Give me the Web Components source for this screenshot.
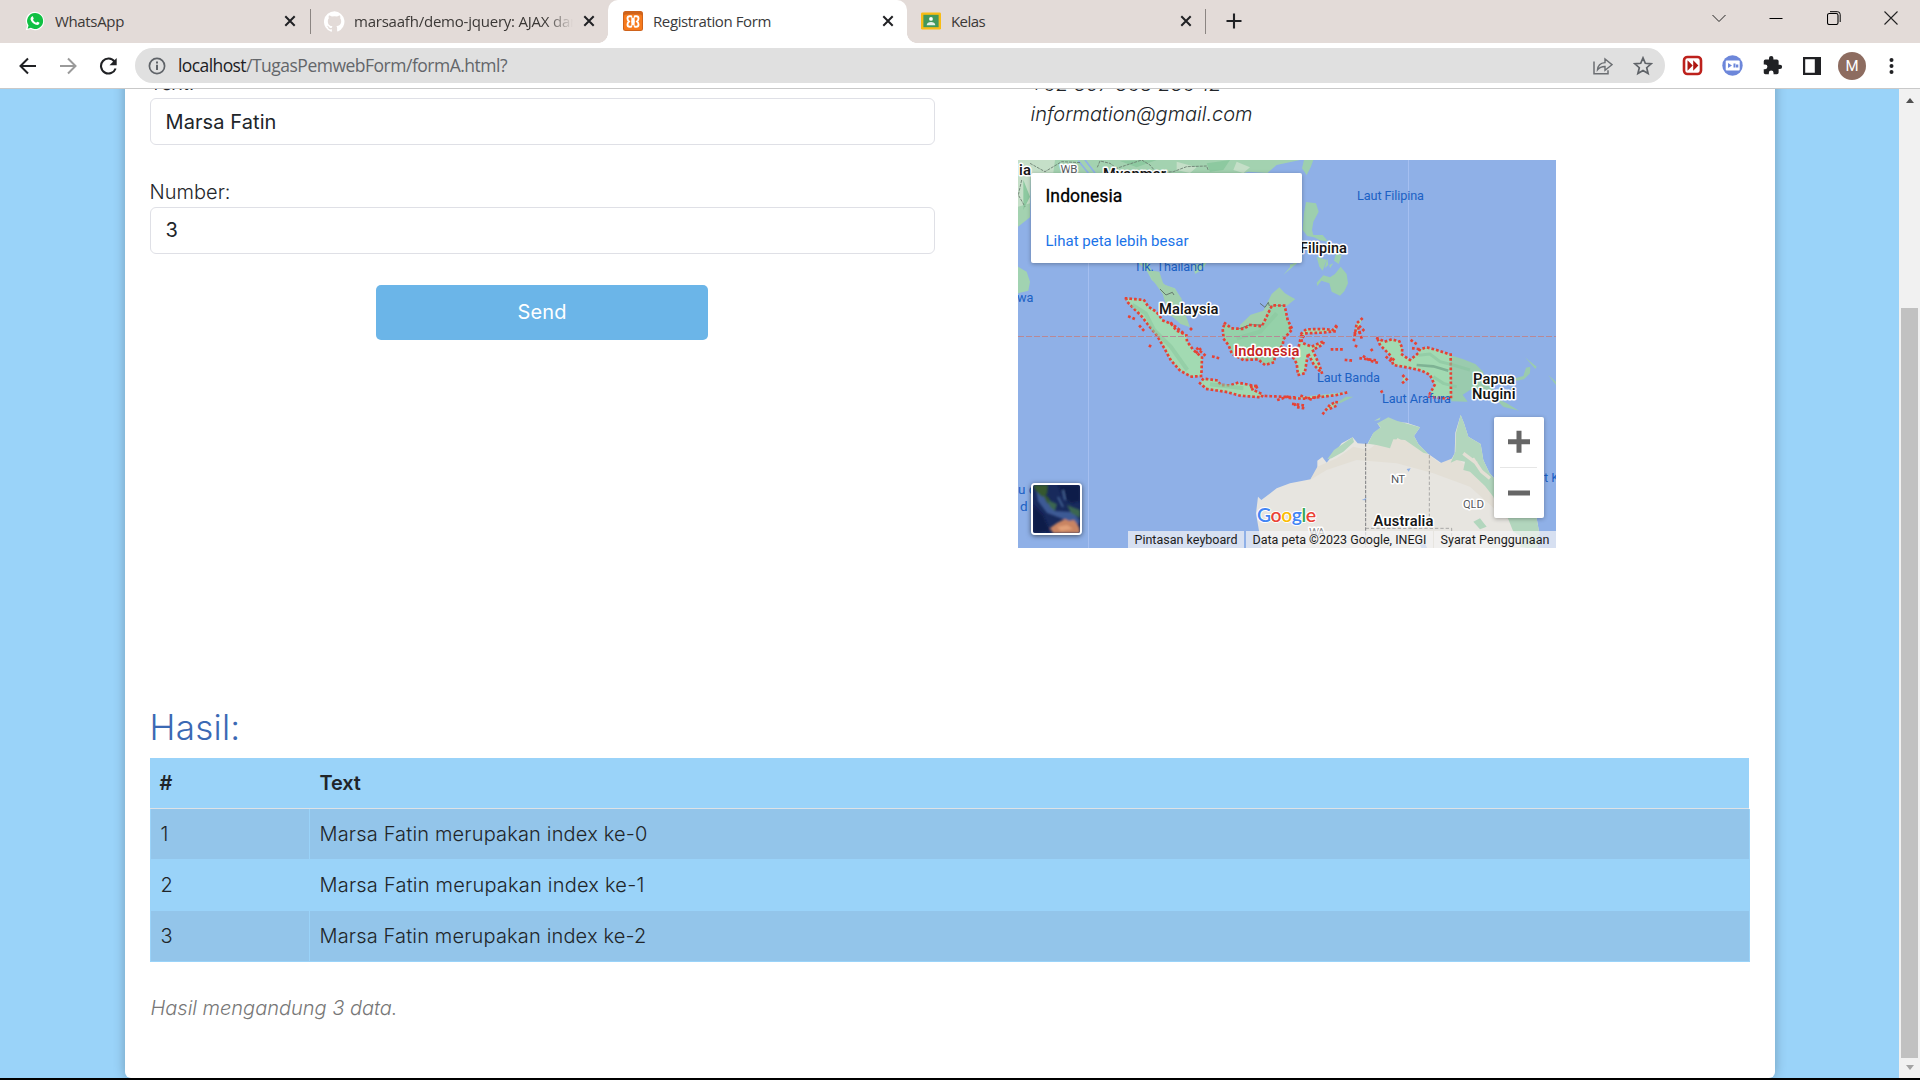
<!DOCTYPE html>
<html lang="id">
<head>
<meta charset="utf-8">
<title>Registration Form</title>
<style>
html,body{margin:0;height:100%;overflow:hidden;background:#000}
body{font-family:Inter,"Liberation Sans",sans-serif}
</style>
</head>
<body>
<browser-window></browser-window>
<script>
const define = (name, html, ready) => {
  const tpl = document.createElement('template');
  tpl.innerHTML = html;
  customElements.define(name, class extends HTMLElement {
    constructor() {
      super();
      this.attachShadow({mode: 'open'}).appendChild(tpl.content.cloneNode(true));
    }
    connectedCallback() { if (ready) ready.call(this, this.shadowRoot); }
  });
};

/* Text run spaced to a given width. */
define('fit-text', `<style>:host{display:inline-block;white-space:pre}span{display:inline-block}</style><span><slot></slot></span>`,
  function (root) {
    const w = +this.getAttribute('w'), s = root.querySelector('span');
    const n = this.textContent.length;
    s.style.letterSpacing = ((w - s.getBoundingClientRect().width) / n) + 'px';
    this.style.width = w + 'px';
  });

define('close-icon', `<style>:host{display:block;width:12px;height:12px}svg{display:block}</style>
<svg width="12" height="12" viewBox="0 0 12 12"><path d="M1.3 1.3 10.7 10.7M10.7 1.3 1.3 10.7" stroke="#202124" stroke-width="2" fill="none"/></svg>`);

define('browser-tab', `<style>
:host{display:flex;align-items:center;height:43px;box-sizing:border-box;position:relative;font:15px/20px "Open Sans","Noto Sans",sans-serif;color:#3b3836;padding:0 13px 1px 15px;width:299px}
.t{flex:1;overflow:hidden;white-space:nowrap;margin-left:10px;height:20px;padding-bottom:1px}
:host([fade]) .t{margin-left:9px;-webkit-mask-image:linear-gradient(90deg,#000 192px,transparent 219px)}
:host([active]){background:#fff;border-radius:10px 10px 0 0;color:#3a3a3c}
:host([active])::before,:host([active])::after{content:"";position:absolute;bottom:0;width:10px;height:10px}
:host([active])::before{left:-10px;background:radial-gradient(circle at 0 0,transparent 9.6px,#fff 10.2px)}
:host([active])::after{right:-10px;background:radial-gradient(circle at 100% 0,transparent 9.6px,#fff 10.2px)}
</style><slot name="icon"></slot><div class="t"><slot></slot></div><close-icon></close-icon>`);

define('tab-strip', `<style>
:host{display:flex;height:43px;background:#e3dbd8;align-items:center;justify-content:space-between}
.tabs{display:flex;align-items:center}
.sep{width:1px;height:25px;background:#8b8582}
svg{display:block;flex:none}
.ctl{display:flex;align-items:center;gap:43.500px;padding-right:22px;padding-bottom:7px}
.kel{width:298px;padding-left:14px;padding-right:13px}
.plus{margin:0 0 1px 20px}
</style>
<div class="tabs">
 <browser-tab style="width:310px;padding-left:25px;padding-right:14px">
  <svg slot="icon" width="20" height="20" viewBox="0 0 20 20"><path d="M10 .7a9.2 9.2 0 0 1 0 18.5 9 9 0 0 1-4.4-1.1L.8 19.3l1.3-4.7A9.2 9.2 0 0 1 10 .7Z" fill="#fff"/><path d="M10 2a8 8 0 1 1-4.1 14.8L2.6 17.7l.9-3.2A8 8 0 0 1 10 2Z" fill="#10c043"/><path d="M7 5.5c.4-.3.8-.1 1 .3l.7 1.7c.1.4-.6 1-.7 1.2.7 1.500 1.700 2.400 3.200 3 .3-.2.8-1.100 1.200-1l1.800.9c.5.3.1 1.300-.3 1.700-1 .9-2.200.8-3.600.2-2.500-1-4.400-3.500-4.700-5C5.500 7.300 6 6.200 7 5.500Z" fill="#fff"/></svg>
  <fit-text w="69">WhatsApp</fit-text></browser-tab>
 <div class="sep"></div>
 <browser-tab fade style="width:297px;padding-left:13px">
  <svg slot="icon" width="21" height="21" viewBox="0 0 16 16"><path fill="#fff" d="M8 .2a8 8 0 0 0-2.500 15.600c.4.1.5-.2.500-.4v-1.500c-2.200.5-2.700-1-2.700-1-.4-.9-.9-1.200-.9-1.200-.7-.5.1-.5.1-.5.8.1 1.200.8 1.200.8.7 1.300 1.900.9 2.300.7.1-.5.3-.9.5-1.100-1.800-.2-3.600-.9-3.600-4 0-.9.3-1.600.8-2.100-.1-.2-.4-1 .1-2.100 0 0 .7-.2 2.200.8a7.500 7.500 0 0 1 4 0c1.500-1 2.200-.8 2.200-.8.4 1.100.2 1.900.1 2.100.5.6.8 1.300.8 2.100 0 3.100-1.900 3.700-3.700 3.900.3.300.6.800.6 1.500v2.200c0 .2.100.500.600.4A8 8 0 0 0 8 .2Z"/></svg>
  <fit-text w="225">marsaafh/demo-jquery: AJAX dan</fit-text></browser-tab>
 <browser-tab active>
  <svg slot="icon" width="20" height="20" viewBox="0 0 20 20"><rect width="20" height="20" rx="2.500" fill="#cf631b"/><rect x="1" y="3.500" width="18" height="15.500" rx="1.500" fill="#f77a1c"/><path d="M6.700 5.200h1.200q1.400 0 1.400 1.500v7.600q0 1.500-1.400 1.500H6.700q-2.200 0-2.200-2.300 0-1.700 1.500-3-1.500-1.300-1.500-3 0-2.300 2.200-2.300ZM13.300 5.200h-1.200q-1.400 0-1.400 1.500v7.600q0 1.500 1.400 1.500h1.200q2.200 0 2.200-2.300 0-1.700-1.500-3 1.500-1.300 1.500-3 0-2.300-2.200-2.300Z" fill="none" stroke="#fff" stroke-width="1.900"/><path d="M10 3.500v3.300M10 14.200v3.500" stroke="#f77a1c" stroke-width="1.600"/><path d="M8.500 10.500h3" stroke="#fff" stroke-width="2.400"/></svg>
  <fit-text w="118">Registration Form</fit-text></browser-tab>
 <browser-tab class="kel">
  <svg slot="icon" width="20" height="18" viewBox="0 0 21 18"><rect width="21" height="18" rx="1.500" fill="#f8bc14"/><rect x="2.500" y="2.500" width="16" height="13" fill="#43985c"/><circle cx="10.500" cy="6.800" r="2" fill="#fff"/><path d="M6 13.500c0-4.500 9-4.500 9 0Z" fill="#e5f1e8"/></svg>
  <fit-text w="34">Kelas</fit-text></browser-tab>
 <div class="sep"></div>
 <svg class="plus" width="16" height="16" viewBox="0 0 16 16"><path d="M8 .5v15M.5 8h15" stroke="#202124" stroke-width="2.100"/></svg>
</div>
<div class="ctl">
 <svg width="14" height="14" viewBox="0 0 14 14"><path d="m.5 4 6.500 6.500L13.500 4" fill="none" stroke="#222"/></svg>
 <svg width="14" height="14" viewBox="0 0 14 14"><path d="M.5 7.500h13" stroke="#000"/></svg>
 <svg width="14" height="14" viewBox="0 0 14 14"><rect x=".5" y="2.500" width="10.500" height="11" rx="1.800" fill="none" stroke="#000" stroke-width="1.100"/><path d="M3 .7h7.500q2.700 0 2.700 2.800v7.500" fill="none" stroke="#000"/></svg>
 <svg width="14" height="14" viewBox="0 0 14 14"><path d="m.5.5 13 13M13.500.5l-13 13" stroke="#222" stroke-width="1.100"/></svg>
</div>`);

define('tool-bar', `<style>
:host{display:flex;align-items:center;height:45px;background:#fff;border-bottom:1px solid #c9c9c9;font:17.5px/24px "Open Sans","Noto Sans",sans-serif}
svg{display:block;flex:none}
.nav{display:flex;align-items:center;gap:21.500px;width:117px;padding-left:18px}
.box{display:flex;align-items:center;flex:1;height:35px;border-radius:18px;background:#e0e0e0;box-sizing:border-box;padding:0 12px 0 13px;color:#63666a}
.u{flex:1;margin-left:12px;display:flex;padding-bottom:2px}
.u .h{color:#202124}
.act{display:flex;gap:20px;align-items:center}
.ext{display:flex;align-items:center;width:255px;box-sizing:border-box;padding-left:17px}
.av{width:28px;height:28px;border-radius:50%;background:#8d6c60;color:#fff;font:15px/28px Roboto,sans-serif;text-align:center;margin-left:17px}
</style>
<div class="nav">
 <svg width="19" height="18" viewBox="0 0 19 18"><path d="M18 9H3M10 1.500 2.500 9l7.500 7.500" fill="none" stroke="#202124" stroke-width="2"/></svg>
 <svg width="19" height="18" viewBox="0 0 19 18"><path d="M1 9h15M9 1.500 16.500 9 9 16.500" fill="none" stroke="#9a9a9a" stroke-width="2"/></svg>
 <svg width="19" height="18" viewBox="0 0 19 18"><path d="M15.500 4.500A7.500 7.500 0 1 0 16.600 11.500" fill="none" stroke="#202124" stroke-width="2.100"/><path d="M17.700 1v7.200h-7.200Z" fill="#202124"/></svg>
</div>
<div class="box">
 <svg width="18" height="18" viewBox="0 0 18 18"><circle cx="9" cy="9" r="7.600" fill="none" stroke="#5f6368" stroke-width="1.700"/><path d="M9 7.800v5.200M9 4.600v1.900" stroke="#5f6368" stroke-width="2"/></svg>
 <div class="u"><fit-text w="68" class="h">localhost</fit-text><fit-text w="261">/TugasPemwebForm/formA.html?</fit-text></div>
 <div class="act">
  <svg width="20" height="18" viewBox="0 0 20 18"><path d="M1 4.500v12.300h14v-3.500" fill="none" stroke="#6b6e72" stroke-width="1.500"/><path d="M4.500 12.800c.3-4.500 2.900-6.800 7.500-7.200V2l7 5.700-7 5.500V9.500c-3.500 0-5.700 1-7.500 3.300Z" fill="none" stroke="#6b6e72" stroke-width="1.400"/></svg>
  <svg width="20" height="20" viewBox="0 0 20 20"><path d="m10 1.900 2.300 5.400 5.900.5-4.500 3.900 1.400 5.800L10 14.400l-5.100 3.100 1.400-5.800L1.800 7.800l5.900-.5Z" fill="none" stroke="#5f6368" stroke-width="1.700"/></svg>
 </div>
</div>
<div class="ext">
 <svg width="21" height="21" viewBox="0 0 21 21"><rect x="2" y="2" width="17" height="17" rx="3.500" fill="#fff" stroke="#bd211c" stroke-width="2.600"/><path d="M5.500 5.300v10.500l5.200-5.200ZM11.200 5.300v10.500l5.200-5.200Z" fill="#ae1712"/></svg>
 <svg style="margin-left:19px" width="21" height="21" viewBox="0 0 21 21"><circle cx="10.500" cy="10.500" r="10.200" fill="#6d87da"/><rect x="3.700" y="5.500" width="14" height="10" rx="1" fill="#fff"/><path d="m6 8 4 2.500L6 13ZM11.500 8.500h2v4h-2ZM14 9.500h2.300v3H14Z" fill="#6d87da"/></svg>
 <svg style="margin-left:19px" width="21" height="21" viewBox="0 0 24 24"><path fill="#202124" d="M20.500 11H19V7a2 2 0 0 0-2-2h-4V3.500a2.500 2.500 0 0 0-5 0V5H4a2 2 0 0 0-2 2v3.800h1.500a2.700 2.700 0 0 1 0 5.400H2V20c0 1.100.9 2 2 2h3.800v-1.500a2.700 2.700 0 0 1 5.400 0V22H17a2 2 0 0 0 2-2v-4h1.500a2.500 2.500 0 0 0 0-5Z"/></svg>
 <svg style="margin-left:20px" width="18" height="18" viewBox="0 0 18 18"><path d="M0 0h18v18H0ZM2.200 2.200v13.600h9.600V2.200Z" fill-rule="evenodd" fill="#202124"/></svg>
 <div class="av">M</div>
 <svg style="margin-left:23px" width="5" height="18" viewBox="0 0 5 18"><g fill="#202124"><circle cx="2.500" cy="3" r="2"/><circle cx="2.500" cy="9" r="2"/><circle cx="2.500" cy="15" r="2"/></g></svg>
</div>`);

define('scroll-bar', `<style>
:host{display:flex;flex-direction:column;align-items:center;width:21px;background:#f1f1f1}
i{display:block;width:0;height:0;border:4.500px solid transparent}
.up{border-bottom:5px solid #505050;border-top:0;margin-top:9px}
.th{width:17px;height:750px;background:#c1c1c1;margin-top:205px}
.dn{border-top:5px solid #a3a3a3;border-bottom:0;margin-top:7px}
</style><i class="up"></i><div class="th"></div><i class="dn"></i>`);

define('form-field', `<style>
:host{display:block;font-weight:300;font-size:20px;line-height:30px;color:#24262a}
.in{display:flex;align-items:center;box-sizing:border-box;height:47px;border:1px solid #dfe0e6;border-radius:6px;padding:0 15px;font-weight:400;color:#212529}
:host(:not([raised])) ::slotted([slot=value]){margin-top:1px}
:host([raised]) ::slotted([slot=value]){margin-top:-1px}
</style><div class="l"><slot name="label"></slot></div><div class="in"><slot name="value"></slot></div>`);

define('send-button', `<style>
:host{display:flex;align-items:center;justify-content:center;width:332px;height:55px;box-sizing:border-box;padding:0 0 2px 1px;border-radius:5px;background:#6bb5e8;color:#fff;font-size:20px;line-height:30px;font-weight:400}
</style><slot></slot>`);

define('map-view', `<style>
:host{display:block;position:relative;width:538px;height:388px;overflow:hidden;font-family:Roboto,sans-serif}
svg{display:block}
.card{position:absolute;left:13px;top:13px;width:271px;height:90px;box-sizing:border-box;background:#fff;border-radius:2px;box-shadow:0 1px 4px rgba(0,0,0,.3);padding:12px 15px}
.card b{display:block;font-weight:400;-webkit-text-stroke:.3px #000;font-size:17.500px;line-height:22px;color:#000}
.card a{display:block;font-size:15px;line-height:20px;color:#1a73e8;margin-top:24px}
.zoom{position:absolute;left:476px;top:257px;width:50px;height:101px;background:#fff;border-radius:2px;box-shadow:0 1px 4px rgba(0,0,0,.3)}
.thumb{position:absolute;left:13px;top:323px;width:51px;height:52px;box-sizing:border-box;border:2px solid #fff;border-radius:4px;box-shadow:0 1px 5px rgba(0,0,0,.55);overflow:hidden}
.cr{position:absolute;right:0;bottom:0;display:flex;gap:1px;font-size:12.500px;line-height:17px;color:#1c1c1c;height:17px}
.cr div{background:rgba(245,245,245,.7);box-sizing:border-box;padding-left:7px}
.a{paint-order:stroke;stroke:#fff;stroke-width:3px;stroke-linejoin:round}
</style>
<svg width="538" height="388" viewBox="1018 160 538 388">
<rect x="1018" y="160" width="538" height="388" fill="#8fb0e7"/>
<path d="M1088.500 160v388M1408.500 160v388" stroke="#a5bff0"/>
<g transform="translate(1010 80) scale(.33333)">
 <path fill="#a3d2b0" d="M24 240H870L800 255 772 279 715 275 690 283 560 283 470 279 430 283 300 300 215 280 190 300 62 300 60 412 24 440Z"/>
 <path fill="#c5dfc8" d="M24 240H135L130 278 62 280 60 370 24 380ZM500 245 560 262 540 279 500 270ZM680 245 720 262 700 279 670 270Z"/>
 <path fill="#8dc9a0" d="M40 300 60 350 40 390ZM590 250 660 240 640 270 600 275ZM330 243 440 240 380 262Z"/>
 <path d="M205 242 235 279M225 240 255 279" fill="none" stroke="#8fb0e7" stroke-width="5"/>
 <path d="M60 250 105 275 155 245 213 248M262 262 270 243 300 250 320 265 395 240 420 255 440 279 490 275 530 260 590 258 595 272M35 300 25 345 45 380" fill="none" stroke="#687a6e" stroke-width="2.500" stroke-dasharray="9 3"/>
 <path d="M24 560 50 575 60 605 55 632 24 640ZM385 548 410 545 430 580 465 615 495 625 510 650 480 640 455 625 425 600 412 575ZM550 555 590 548 575 570 555 582ZM820 585 850 550 862 548Z" fill="#a1d3b1"/>
</g>
<g transform="translate(1010 270) scale(.33333)">
 <path fill="#a1cfad" d="M412 0 448 5 460 42 492 56 514 84 528 138 540 172 512 162 475 130 458 72 430 32ZM690 165 722 134 760 122 785 72 808 52 825 70 855 88 830 108 788 106 762 164 720 172 690 178Z"/>
 <path fill="none" stroke="#596861" stroke-width="2.500" d="M450 57 468 75 487 67 492 75M750 100 765 112 775 97 778 108M684 178 718 165 762 165 785 107 825 107"/>
 <g fill="#a2dab2" stroke="#e64235" stroke-width="8" stroke-dasharray=".1 14" stroke-linecap="square">
 <path d="M348 85 370 87 402 90 414 109 440 126 458 151 483 161 500 182 529 195 531 214 550 240 576 262 574 318 544 320 510 302 482 270 462 233 440 195 418 169 395 139 354 98Z"/>
 <path d="M570 340 580 326 622 331 632 345 660 346 684 338 745 350 726 358 758 373 755 382 690 377 650 366 590 357Z"/>
 <path fill="#95d1a9" d="M645 160 665 175 700 177 720 165 756 169 786 106 824 107 833 150 847 178 821 207 818 225 795 258 792 277 765 285 744 268 700 270 666 252 656 226 641 207 638 176Z"/>
 <path d="M358 140 372 146M390 169 400 180M420 228 430 234M543 177 545 179M484 160 520 189M562 236 590 260M560 247 575 233M610 260 624 264M724 350 747 347M768 378 855 382M805 389 840 378M855 404 868 400"/>
 </g>
 <path d="m367 105 40 25 25 50 50 50 50 70M680 205 750 185 800 130M600 343 700 355" fill="none" stroke="#8cc8a0" stroke-width="12" opacity=".6"/>
</g>
<g transform="translate(1290 150) scale(.33333)" fill="#9dcfae">
 <path d="M42 30H70L62 52 50 75 36 55ZM48 156 78 160 86 185 70 215 66 240 72 262 52 258 38 240 42 190ZM60 255 98 255 115 275 88 270ZM80 320 110 330 98 362 88 350ZM112 325 104 355 115 345ZM138 310 155 316 146 342 132 332ZM118 345 130 340 120 355ZM80 398 100 376 120 382 135 372 152 350 170 372 174 400 163 424 150 437 125 425 118 400 94 392 82 408ZM0 355 22 340 0 343ZM0 440 15 447 0 455Z"/>
</g>
<g transform="translate(1290 270) scale(.33333)">
 <path fill="#9acbae" d="M482 256 520 268 556 282 580 306 582 335 605 350 620 385 650 400 687 422 640 410 610 380 575 362 540 360 518 374 533 395 484 394ZM670 326 700 318 708 293 721 290 720 310 702 328 680 332ZM705 262 740 290 736 297ZM775 316 798 335 798 345ZM140 398 168 380 190 380 150 400Z"/>
 <g fill="#a2dab2" stroke="#e64235" stroke-width="8" stroke-dasharray=".1 14" stroke-linecap="square">
 <path d="M262 205 285 215 305 208 328 214 337 235 335 253 360 270 382 252 390 238 410 232 440 240 482 254 483 387 415 380 434 345 420 315 395 302 355 293 310 285 300 255 270 225Z"/>
 <path d="M35 190 48 178 100 177 128 180 142 164 134 184 95 188 48 190 34 207 36 218 65 230 102 213 98 224 68 240 88 285 96 310 72 285 54 250 44 310 24 315 20 280 10 265 25 235Z"/>
 <path d="M192 210 200 160 217 145M195 190 215 185M210 170 220 180M198 228 205 233M126 238 168 238M168 270 190 272M212 265 265 272M245 240 252 235M365 212 380 222M370 235 392 238M340 318 350 328 336 340M275 365 284 360M0 384 40 386 100 380 140 375 180 365M10 402 48 407M25 412 50 416M100 430 120 404 140 395 138 408 115 418M0 174 8 182"/>
 <path fill="none" d="M35 378 62 388 90 376M205 175 215 205M222 260 240 272 262 278M290 262 305 275 315 262"/>
 </g>
 <path d="M380 285 430 289 475 302" fill="none" stroke="#7eb394" stroke-width="8"/>
 <path d="M385 256 420 252 450 275 490 285 540 300M430 320 460 340 500 350" fill="none" stroke="#8ac5a0" stroke-width="9" opacity=".6"/>
</g>
<path d="M1018 336.500H1556" stroke="#b88896" stroke-dasharray="6 2"/>
<g transform="translate(1290 400) scale(.33333)">
 <path fill="#e7e5e0" d="M-102 340 -96 290 -86 300 -40 265 0 250 62 238 82 208 82 182 97 171 110 188 132 160 155 130 188 112 203 130 232 132 250 100 272 85 262 70 300 65 350 68 390 82 372 108 385 132 412 160 455 190 478 190 494 160 496 98 512 45 522 70 535 110 572 132 580 180 598 218 625 250 690 300 740 355 748 400 742 450H-85L-90 410Z"/>
 <path fill="#e3dfd6" d="M82 200 140 175 190 140 235 150 300 100 370 130 450 190 500 170 570 240 630 300 690 380 640 350 540 260 430 220 320 190 200 180 110 210 60 240Z"/>
 <path fill="#b2d6bd" d="M112 178 132 150 188 112 192 126 160 155 125 175ZM234 131 250 98 272 82 262 70 295 52 320 62 390 82 372 108 385 132 415 162 400 158 345 120 310 118 300 145 260 135ZM252 62 272 52 268 60ZM482 188 496 155 498 98 512 44 522 70 535 110 572 132 580 180 598 218 625 250 690 300 740 355 748 400 742 450 690 440 700 415 670 395 652 350 625 340 610 290 585 258 540 215 520 210 525 185 500 180ZM550 365 570 355 590 380 570 388Z"/>
 <path fill="none" stroke="#e4dfd5" stroke-width="10" d="M320 118 355 138M548 175 575 215 600 235M520 160 560 190"/>
 <path fill="#8fb0e7" d="M350 207 362 205 356 215ZM215 300 230 293 226 301ZM390 435 405 430 412 445H395Z"/>
 <path fill="none" stroke="#65686c" stroke-width="2.500" stroke-dasharray="10 4" d="M227 130V440"/><path fill="none" stroke="#9b9b9a" stroke-width="2.500" stroke-dasharray="10 6" d="M418 165V385M227 385H485V440"/>
</g>
<g font-size="12.700" fill="#1c61c4">
 <text x="1134" y="271" textLength="70">Tlk. Thailand</text>
 <text x="1357" y="200" textLength="67">Laut Filipina</text>
 <text x="1317" y="382" textLength="63">Laut Banda</text>
 <text x="1382" y="403" textLength="69">Laut Arafura</text>
 <text x="1017" y="302">wa</text><text x="1018" y="494" font-size="13.500">u d</text><text x="1020" y="510.500" font-size="13.500">d</text><text x="1544" y="482">t K</text>
</g>
<g class="a" font-size="14.800" font-weight="600" fill="#171717">
 <text x="1019" y="174.500" textLength="12">ia</text>
 <text x="1103" y="178.500" textLength="63">Myanmar</text>
 <text x="1159" y="314" textLength="59.500">Malaysia</text>
 <text x="1234" y="355.500" textLength="65.500" fill="#c5221f">Indonesia</text>
 <text x="1300" y="252.500" textLength="47">Filipina</text>
 <text x="1473" y="384" textLength="42">Papua</text>
 <text x="1472" y="399" textLength="43.500">Nugini</text>
 <text x="1373.500" y="525.500" textLength="60">Australia</text>
</g>
<g class="a" font-size="11.500" fill="#56595d">
 <text x="1060.500" y="172.500" textLength="17">WB</text><text x="1391" y="482.500" textLength="14">NT</text><text x="1463" y="508" textLength="21">QLD</text><text x="1309" y="536" textLength="16" fill="#8a8a8a">WA</text>
</g>
<text class="a" x="1257" y="521.500" font-family="Lato,sans-serif" font-size="19.500" font-weight="600" textLength="59" fill="#4285f4" style="stroke-width:2px">G<tspan fill="#ea4335">o</tspan><tspan fill="#fbbc04">o</tspan>g<tspan fill="#34a853">l</tspan><tspan fill="#ea4335">e</tspan></text>
</svg>
<div class="card"><b><fit-text w="77">Indonesia</fit-text></b><a><fit-text w="143">Lihat peta lebih besar</fit-text></a></div>
<div class="zoom"><svg width="50" height="101" viewBox="0 0 50 101"><path d="M14 24.700h22M25 13.700v22M14 76h22" stroke="#666" stroke-width="5"/><path d="M6 50.500h37" stroke="#e6e6e6"/></svg></div>
<div class="thumb"><svg width="47" height="48" viewBox="0 0 47 48"><defs><filter id="b"><feGaussianBlur stdDeviation=".9"/></filter></defs><rect width="47" height="48" fill="#182a5c"/><g filter="url(#b)"><path d="M25 0 47 0V16L38 18 30 12ZM0 20 10 30 17 46 0 48Z" fill="#101d4a"/><path d="M3 4 12 10 22 26 40 27 47 36 45 40 30 34 14 28 5 16Z" fill="#3d5a94"/><path d="M0 0H15L14 9 9 12 3 6ZM9 8 15 12 20 21 14 18Z" fill="#35592f"/><path d="M15 15 24 19 22 26 17 22ZM34 20 47 25V33L38 28Z" fill="#3b6650"/><path d="M30 5 32 15M25 12 30 22" stroke="#4e6fa0" stroke-width="1.500"/><path d="M17 43 24 38 32 34 36 36 41 35 46 42 47 48H20Z" fill="#c98462"/><path d="M24 42 34 40 40 44 28 46Z" fill="#e2a078"/></g></svg></div>
<div class="cr"><div style="width:116px"><fit-text w="103">Pintasan keyboard</fit-text></div><div style="width:187px;margin-left:1px"><fit-text w="174">Data peta ©2023 Google, INEGI</fit-text></div><div style="width:122px"><fit-text w="109">Syarat Penggunaan</fit-text></div></div>`);

define('result-row', `<style>
:host{display:flex;box-sizing:border-box;height:51px;background:#9ad3f9;font-size:20px;line-height:30px;color:#212529;font-weight:300;border:1px solid #9ad3f9;border-top:0}
.n,.x{display:flex;align-items:center;padding-left:10px;box-sizing:border-box}
.n{width:159px;border-right:1px solid #9ad3f9}.x{flex:1}
:host([odd]) .n,:host([odd]) .x{background:#93c5ea}
:host([head]){font-weight:600;border:0;border-bottom:1px solid #dee2e6;width:1599px}
:host([head]) .n{width:160px}
</style><div class="n"><slot name="n"></slot></div><div class="x"><slot></slot></div>`);

define('registration-page', `<style>
:host{display:flex;justify-content:center;flex:1;background:#9ad3f9;overflow:hidden}
.card{width:1650px;height:1011px;margin-top:-22px;box-sizing:border-box;background:#fff;border-radius:6px;padding:1px 25px 0;box-shadow:0 0 12px rgba(0,0,0,.26)}
.top{display:flex;height:638px}
.form{display:flex;flex-direction:column;width:785px;margin-right:83px}
.form form-field+form-field{margin-top:32px}
send-button{margin:31px 0 0 226px}
.ct{font:italic 300 20px/30px Inter,sans-serif;color:#212529;padding:1px 0 0 13px;margin-bottom:31px}
.ct div{height:30px}
h2{margin:0 0 10px;font-weight:300;font-size:35px;line-height:42px;height:42px;color:#3b69b4}
.tbl{width:1600px}
.foot{margin-top:31px;font:italic 300 20px/30px Inter,sans-serif;color:#777;padding-left:1px}
</style>
<div class="card">
 <div class="top">
  <div class="form">
   <form-field><span slot="label">Text:</span><fit-text w="111" slot="value">Marsa Fatin</fit-text></form-field>
   <form-field raised><fit-text w="81" slot="label">Number:</fit-text><span slot="value">3</span></form-field>
   <send-button><fit-text w="49">Send</fit-text></send-button>
  </div>
  <div>
   <div class="ct"><div><fit-text w="191">+62 857 863 286 12</fit-text></div><div><fit-text w="222">information@gmail.com</fit-text></div></div>
   <map-view></map-view>
  </div>
 </div>
 <h2><fit-text w="91">Hasil:</fit-text></h2>
 <div class="tbl">
  <result-row head><span slot="n">#</span><fit-text w="41">Text</fit-text></result-row>
  <result-row odd><span slot="n">1</span><fit-text w="328">Marsa Fatin merupakan index ke-0</fit-text></result-row>
  <result-row><span slot="n">2</span><fit-text w="325">Marsa Fatin merupakan index ke-1</fit-text></result-row>
  <result-row odd><span slot="n">3</span><fit-text w="327">Marsa Fatin merupakan index ke-2</fit-text></result-row>
 </div>
 <div class="foot"><fit-text w="247">Hasil mengandung 3 data.</fit-text></div>
</div>`);

define('browser-window', `<style>
:host{display:flex;flex-direction:column;width:1920px;height:1080px;box-sizing:border-box;border-bottom:2px solid #000}
.v{display:flex;flex:1;min-height:0}
</style><tab-strip></tab-strip><tool-bar></tool-bar><div class="v"><registration-page></registration-page><scroll-bar></scroll-bar></div>`);
</script>
</body>
</html>
